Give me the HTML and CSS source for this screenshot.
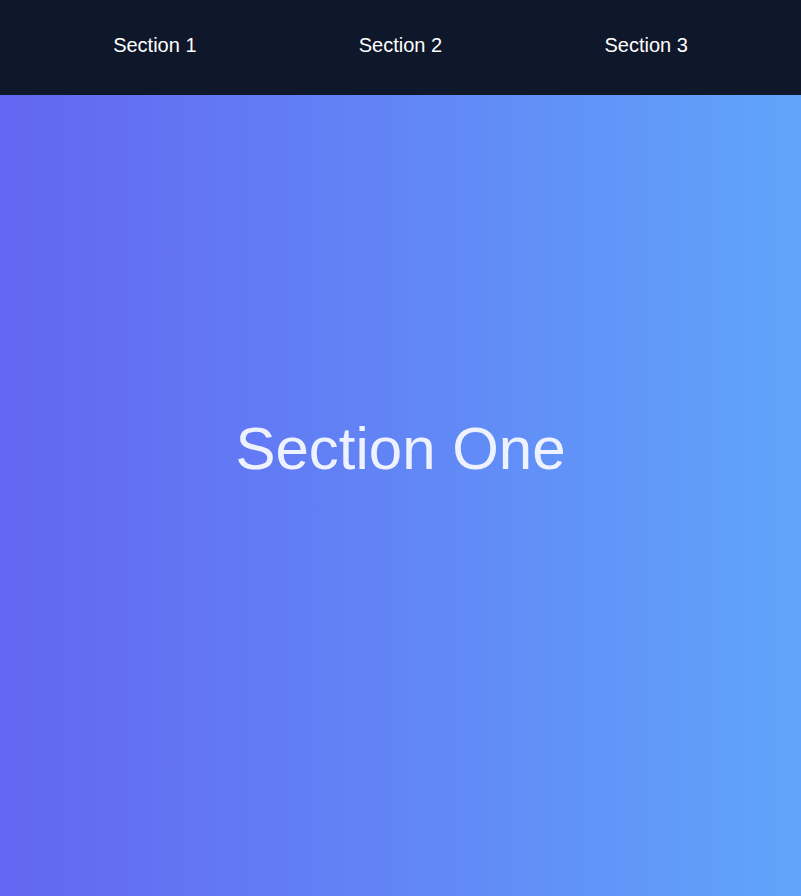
FILE: index.html
```html
<!DOCTYPE html>
<html lang="en">
<head>
<meta charset="utf-8">
<title>Sections</title>
<link rel="stylesheet" href="styles.css">
</head>
<body>
<nav class="nav">
  <a class="nav-link" href="#one">Section 1</a>
  <a class="nav-link" href="#two">Section 2</a>
  <a class="nav-link" href="#three">Section 3</a>
</nav>
<main>
  <section class="section section-one" id="one">
    <h1 class="section-title">Section One</h1>
  </section>
</main>
</body>
</html>
```

FILE: styles.css
```css
html, body {
  margin: 0;
  padding: 0;
}
body {
  font-family: "Liberation Sans", Arial, sans-serif;
  overflow: hidden;
}
.nav {
  position: fixed;
  top: 0;
  left: 0;
  right: 0;
  height: 95px;
  padding: 0 32px 4px;
  box-sizing: border-box;
  background: #0f172a;
  display: flex;
  justify-content: space-around;
  align-items: center;
  z-index: 10;
}
.nav-link {
  color: #ffffff;
  text-decoration: none;
  font-size: 20px;
}
.section {
  height: 100vh;
  display: flex;
  align-items: center;
  justify-content: center;
}
.section-one {
  background: linear-gradient(90deg, #6366f1, #60a5fa);
}
.section-title {
  margin: 0;
  font-size: 60px;
  font-weight: 400;
  color: #eef2ff;
}
```
